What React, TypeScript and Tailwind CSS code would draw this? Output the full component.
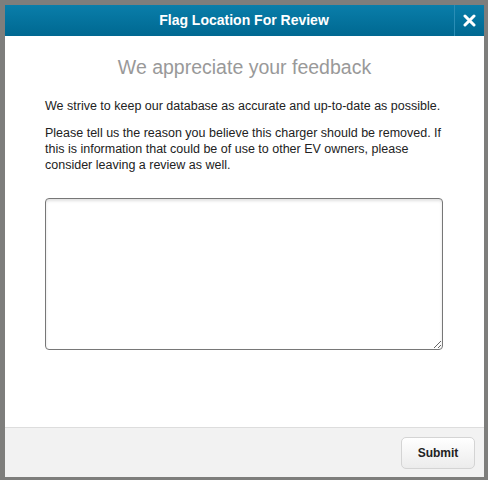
export default function App() {
  return (
    <div className="relative h-[480px] w-[488px] overflow-hidden bg-[#7e7e7c] font-['Liberation_Sans',Arial,sans-serif]">
      <div className="absolute left-[5px] top-[5px] flex h-[472px] w-[479px] flex-col bg-white">
        <div className="flex h-[31px] items-stretch bg-gradient-to-b from-[#0a7eaa] to-[#006891]">
          <div className="flex flex-1 items-center justify-center pl-[29px] text-[14px] font-bold text-white">
            Flag Location For Review
          </div>
          <button className="flex w-[30px] items-center justify-center border-l border-[#2a8db5] text-white">
            <svg width="13" height="13" viewBox="0 0 13 13">
              <path d="M2 2L11 11M11 2L2 11" stroke="white" strokeWidth="3" strokeLinecap="round" />
            </svg>
          </button>
        </div>
        <div className="flex-1 px-[40px]">
          <h2 className="mt-[19px] text-center text-[19.5px] leading-[24px] text-[#999]">We appreciate your feedback</h2>
          <p className="mt-[19px] text-[12.5px] leading-[16px] text-[#222]">
            We strive to keep our database as accurate and up-to-date as possible.
          </p>
          <p className="mt-[11px] text-[12.5px] leading-[16px] text-[#222]">
            Please tell us the reason you believe this charger should be removed. If this is information that could be of use to other EV owners, please consider leaving a review as well.
          </p>
          <textarea className="mt-[25px] block h-[152px] w-[398px] rounded-[4px] border border-[#777] shadow-[inset_0_2px_3px_rgba(0,0,0,0.12)] outline-none" />
        </div>
        <div className="flex h-[50px] items-center justify-end border-t border-[#ddd] bg-[#f2f2f2] pr-[9px]">
          <button className="h-[32px] w-[74px] rounded-[5px] border border-[#d4d4d4] bg-gradient-to-b from-white to-[#ececec] text-[12px] font-bold text-[#222]">
            Submit
          </button>
        </div>
      </div>
    </div>
  );
}
